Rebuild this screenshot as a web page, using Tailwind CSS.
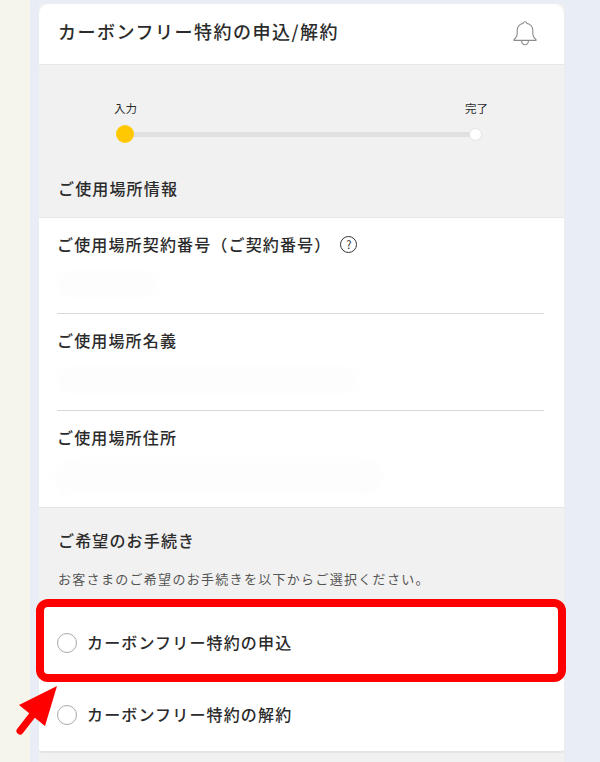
<!DOCTYPE html>
<html lang="ja">
<head>
    <meta charset="UTF-8">
    <meta name="viewport" content="width=device-width, initial-scale=1.0">
    <title>カーボンフリー特約の申込/解約</title>
    <script src="https://cdn.jsdelivr.net/npm/@tailwindcss/browser@4"></script>
</head>
<body class="bg-[#e9eef6] font-['Noto_Sans_CJK_JP','Noto_Sans',sans-serif] text-[#2b2b2b]">
    <div class="relative flex w-[600px] h-[762px] overflow-hidden">
        <div class="w-[30px] bg-[#f5f5ec]"></div>

        <main class="ml-[9px] mt-[4px] w-[526px] h-[758px] bg-[#f1f1f1] border-r border-[#ececec]">
            <!-- header -->
            <header class="h-[61px] bg-white rounded-t-[10px] border-b border-[#e8e8e8] flex items-center justify-between pl-[19px] pr-[27px]">
                <h1 class="mb-[5px] text-[18px] font-medium tracking-[1.5px]">カーボンフリー特約の申込/解約</h1>
                <svg class="mb-[2px] w-[24px] h-[25px]" viewBox="0 0 24 25" fill="none" stroke="#8c8c8c" stroke-width="1.1" stroke-linejoin="round">
                    <path d="M1 18.5c2.2-1.6 3.2-3.6 3.2-6.5V9.500C4.200 5.600 7 3 10 2.400 10.400 1.400 11 .8 12 .8s1.600.6 2 1.600c3 .6 5.800 3.200 5.800 7.100V12c0 2.900 1 4.900 3.200 6.500v.9H1z"/>
                    <path d="M8.500 19.500c.2 2.600 1.700 4.300 3.500 4.300s3.300-1.700 3.500-4.300"/>
                </svg>
            </header>

            <!-- stepper -->
            <section class="h-[152px] pt-[34px]">
                <div class="flex justify-between pl-[75px] pr-[76px] text-[11.5px] leading-[18px]">
                    <span>入力</span>
                    <span>完了</span>
                </div>
                <div class="relative flex items-center ml-[77px] w-[366px] h-[18px] mt-[8px]">
                    <div class="absolute left-[4px] right-[4px] h-[5px] bg-[#e0e0e0]"></div>
                    <div class="relative w-[18px] h-[18px] rounded-full bg-[#ffc800]"></div>
                    <div class="relative ml-auto w-[13px] h-[13px] rounded-full bg-white border border-[#e4e4e4]"></div>
                </div>
                <h2 class="mt-[33px] pl-[19px] text-[16px] leading-[24px] font-medium tracking-[1.15px]">ご使用場所情報</h2>
            </section>

            <!-- usage place -->
            <section class="bg-white border-t border-[#e8e8e8] h-[290px] pl-[18px] pr-[20px]">
                <div class="h-[96px] border-b border-[#d9d9d9] pt-[14px]">
                    <div class="flex items-center text-[16px] leading-[24px] font-medium tracking-[1.15px]">
                        <span>ご使用場所契約番号（ご契約番号）</span>
                        <span class="ml-[9px] w-[17px] h-[17px] rounded-full border border-[#333] flex items-center justify-center text-[11px] leading-none font-normal tracking-normal">?</span>
                    </div>
                    <div class="mt-[15px] w-[100px] h-[26px] rounded-full bg-[#fdfdfd] blur-[3px]"></div>
                </div>
                <div class="h-[97px] border-b border-[#d9d9d9] pt-[14px]">
                    <div class="text-[16px] leading-[24px] font-medium tracking-[1.15px]">ご使用場所名義</div>
                    <div class="mt-[15px] w-[302px] h-[26px] rounded-full bg-[#fdfdfd] blur-[3px]"></div>
                </div>
                <div class="pt-[14px]">
                    <div class="text-[16px] leading-[24px] font-medium tracking-[1.15px]">ご使用場所住所</div>
                    <div class="mt-[10px] ml-[-3px] w-[330px] h-[36px] rounded-full bg-[#fdfdfd] blur-[3px]"></div>
                </div>
            </section>

            <!-- procedure -->
            <section class="h-[100px] border-t border-[#e4e4e4] pl-[19px]">
                <h2 class="pt-[20px] text-[16px] leading-[24px] font-medium tracking-[1.15px]">ご希望のお手続き</h2>
                <p class="mt-[17px] text-[13px] leading-[20px] text-[#555] tracking-[1.3px]">お客さまのご希望のお手続きを以下からご選択ください。</p>
            </section>

            <section class="bg-white border-b-2 border-[#e4e4e4] rounded-b-[4px]">
                <label class="h-[72px] flex items-center gap-[10px] pl-[18px]">
                    <span class="w-[20px] h-[20px] rounded-full border-[1.5px] border-[#aaa] bg-white"></span>
                    <span class="mb-[2px] text-[16px] font-medium tracking-[1.15px]">カーボンフリー特約の申込</span>
                </label>
                <label class="h-[72px] flex items-center gap-[10px] pl-[18px]">
                    <span class="w-[20px] h-[20px] rounded-full border-[1.5px] border-[#aaa] bg-white"></span>
                    <span class="mb-[2px] text-[16px] font-medium tracking-[1.15px]">カーボンフリー特約の解約</span>
                </label>
            </section>
        </main>

        <!-- red annotation -->
        <div class="absolute left-[36px] top-[599px] w-[530px] h-[83px] border-[8px] border-[#ff0000] rounded-[12px]"></div>
        <svg class="absolute left-[14px] top-[684px] w-[46px] h-[52px]" viewBox="0 0 46 52" fill="#ff0000">
            <polygon points="43,2 5,21 31,42"/>
            <line x1="27" y1="20" x2="6" y2="47" stroke="#ff0000" stroke-width="7" stroke-linecap="round"/>
        </svg>
    </div>
</body>
</html>
